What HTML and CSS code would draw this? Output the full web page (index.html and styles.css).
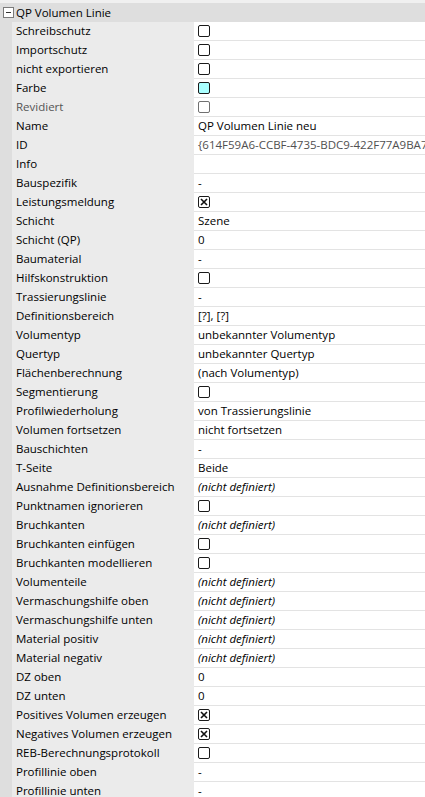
FILE: index.html
```html
<!DOCTYPE html>
<html lang="de">
<head>
<meta charset="utf-8">
<title>Eigenschaften</title>
<link rel="stylesheet" href="styles.css">
</head>
<body>
<div class="grid">
  <div class="cat">
    <span class="toggle"><svg width="11" height="11" viewBox="0 0 11 11"><rect x="0.5" y="0.5" width="10" height="10" fill="#fff" stroke="#7a7a7a"/><path d="M3 5.5h5" stroke="#333" stroke-width="1"/></svg></span>
    <span class="cat-title">QP Volumen Linie</span>
  </div>
  <div class="rows">
    <div class="row"><div class="lab">Schreibschutz</div><div class="val"><span class="cb"></span></div></div>
    <div class="row"><div class="lab">Importschutz</div><div class="val"><span class="cb"></span></div></div>
    <div class="row"><div class="lab">nicht exportieren</div><div class="val"><span class="cb"></span></div></div>
    <div class="row"><div class="lab">Farbe</div><div class="val"><span class="cb cyan"></span></div></div>
    <div class="row"><div class="lab dis">Revidiert</div><div class="val"><span class="cb dis"></span></div></div>
    <div class="row"><div class="lab">Name</div><div class="val">QP Volumen Linie neu</div></div>
    <div class="row"><div class="lab">ID</div><div class="val dis">{614F59A6-CCBF-4735-BDC9-422F77A9BA7E}</div></div>
    <div class="row"><div class="lab">Info</div><div class="val"></div></div>
    <div class="row"><div class="lab">Bauspezifik</div><div class="val">-</div></div>
    <div class="row"><div class="lab">Leistungsmeldung</div><div class="val"><span class="cb x"><svg width="12" height="12" viewBox="0 0 12 12"><path d="M3 3l6 6M9 3l-6 6" stroke="#111" stroke-width="1.6"/></svg></span></div></div>
    <div class="row"><div class="lab">Schicht</div><div class="val">Szene</div></div>
    <div class="row"><div class="lab">Schicht (QP)</div><div class="val">0</div></div>
    <div class="row"><div class="lab">Baumaterial</div><div class="val">-</div></div>
    <div class="row"><div class="lab">Hilfskonstruktion</div><div class="val"><span class="cb"></span></div></div>
    <div class="row"><div class="lab">Trassierungslinie</div><div class="val">-</div></div>
    <div class="row"><div class="lab">Definitionsbereich</div><div class="val">[?], [?]</div></div>
    <div class="row"><div class="lab">Volumentyp</div><div class="val">unbekannter Volumentyp</div></div>
    <div class="row"><div class="lab">Quertyp</div><div class="val">unbekannter Quertyp</div></div>
    <div class="row"><div class="lab">Flächenberechnung</div><div class="val">(nach Volumentyp)</div></div>
    <div class="row"><div class="lab">Segmentierung</div><div class="val"><span class="cb"></span></div></div>
    <div class="row"><div class="lab">Profilwiederholung</div><div class="val">von Trassierungslinie</div></div>
    <div class="row"><div class="lab">Volumen fortsetzen</div><div class="val">nicht fortsetzen</div></div>
    <div class="row"><div class="lab">Bauschichten</div><div class="val">-</div></div>
    <div class="row"><div class="lab">T-Seite</div><div class="val">Beide</div></div>
    <div class="row"><div class="lab">Ausnahme Definitionsbereich</div><div class="val it">(nicht definiert)</div></div>
    <div class="row"><div class="lab">Punktnamen ignorieren</div><div class="val"><span class="cb"></span></div></div>
    <div class="row"><div class="lab">Bruchkanten</div><div class="val it">(nicht definiert)</div></div>
    <div class="row"><div class="lab">Bruchkanten einfügen</div><div class="val"><span class="cb"></span></div></div>
    <div class="row"><div class="lab">Bruchkanten modellieren</div><div class="val"><span class="cb"></span></div></div>
    <div class="row"><div class="lab">Volumenteile</div><div class="val it">(nicht definiert)</div></div>
    <div class="row"><div class="lab">Vermaschungshilfe oben</div><div class="val it">(nicht definiert)</div></div>
    <div class="row"><div class="lab">Vermaschungshilfe unten</div><div class="val it">(nicht definiert)</div></div>
    <div class="row"><div class="lab">Material positiv</div><div class="val it">(nicht definiert)</div></div>
    <div class="row"><div class="lab">Material negativ</div><div class="val it">(nicht definiert)</div></div>
    <div class="row"><div class="lab">DZ oben</div><div class="val">0</div></div>
    <div class="row"><div class="lab">DZ unten</div><div class="val">0</div></div>
    <div class="row"><div class="lab">Positives Volumen erzeugen</div><div class="val"><span class="cb x"><svg width="12" height="12" viewBox="0 0 12 12"><path d="M3 3l6 6M9 3l-6 6" stroke="#111" stroke-width="1.6"/></svg></span></div></div>
    <div class="row"><div class="lab">Negatives Volumen erzeugen</div><div class="val"><span class="cb x"><svg width="12" height="12" viewBox="0 0 12 12"><path d="M3 3l6 6M9 3l-6 6" stroke="#111" stroke-width="1.6"/></svg></span></div></div>
    <div class="row"><div class="lab">REB-Berechnungsprotokoll</div><div class="val"><span class="cb"></span></div></div>
    <div class="row"><div class="lab">Profillinie oben</div><div class="val">-</div></div>
    <div class="row"><div class="lab">Profillinie unten</div><div class="val">-</div></div>
  </div>
</div>
</body>
</html>
```

FILE: styles.css
```css
html, body {
  margin: 0;
  padding: 0;
  background: #f0f0f0;
  overflow: hidden;
}
body {
  font-family: "Open Sans", "Noto Sans", "Liberation Sans", sans-serif;
  font-size: 11.5px;
  color: #000;
}
.grid {
  padding-top: 3px;
}
.cat {
  height: 19px;
  background: #dedede;
  display: flex;
  align-items: center;
}
.toggle {
  width: 11px;
  height: 11px;
  margin-left: 3px;
  margin-right: 2px;
  display: flex;
}
.cat-title {
  line-height: 19px;
}
.rows {
  background: #dedede;
  padding-left: 12px;
}
.row {
  display: flex;
  height: 19px;
}
.lab {
  width: 176px;
  padding-left: 4px;
  background: #ebebeb;
  line-height: 18px;
  white-space: nowrap;
  overflow: hidden;
  border-right: 2px solid #ebebeb;
}
.lab.dis {
  color: #555;
}
.val {
  flex: 1;
  background: #fff;
  border-bottom: 1px solid #e3e3e3;
  height: 18px;
  line-height: 18px;
  padding-left: 4px;
  white-space: nowrap;
  overflow: hidden;
  display: flex;
  align-items: center;
}
.val.dis {
  color: #505050;
}
.val.it {
  font-style: italic;
}
.cb {
  box-sizing: border-box;
  width: 12px;
  height: 12px;
  border: 1px solid #1a1a1a;
  border-radius: 2px;
  background: #fff;
  position: relative;
  display: block;
}
.cb.cyan {
  background: #aaffff;
}
.cb.dis {
  border-color: #707070;
}
.cb.x svg {
  position: absolute;
  left: -1px;
  top: -1px;
}
```
